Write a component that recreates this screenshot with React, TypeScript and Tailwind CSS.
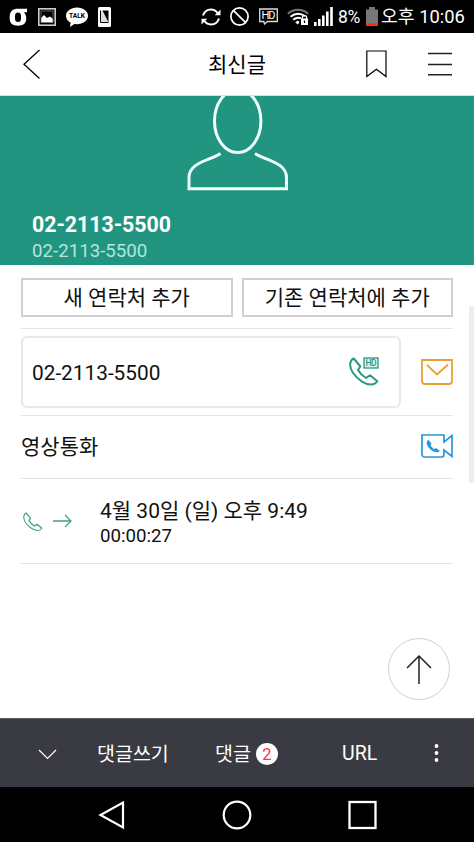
import type { ReactNode } from 'react';

const HANDSET = 'M4.8 1.5L11.3 9.5L9 13C11 16.5 13.5 19 17 21L21 18.3L28.3 24.3C25.5 28.8 19 28.3 13 24.6C6 20 .2 12.5 1.3 6C1.7 3.8 2.8 2.2 4.8 1.5Z';

/** Android status bar */
const StatusBar = () => {
    return (
        <div className="h-[33px] shrink-0 bg-black text-white flex items-center pl-[9px] pr-[9px]">
            <svg width={18} height={18} viewBox="0 0 18 18" className="mr-[11px]">
                <path d="M18 .5V4.3H14.8C16.5 6 17.3 8 17.3 10.5C17.3 15.5 14 17.7 9 17.7C4 17.7 .7 15.5 .7 10.5V8.5C.7 3 4 .7 9 .7C13 .7 16.5 .9 18 .5ZM9 4.5C6.8 4.5 6 6 6 8.5V10.5C6 13 7 14 9 14C11 14 12 13 12 10.5V8C12 6 11 4.5 9 4.5Z" fill="white" fillRule="evenodd" />
            </svg>
            <svg width={18} height={18} viewBox="0 0 18 18" fill="none" className="mr-[10px]">
                <rect x=".8" y=".8" width="16.4" height="16.4" stroke="#ccc" strokeWidth="1.6" />
                <path d="M3 14.5V10L6 7L9 10L12 8.5L15 11V14.5Z" fill="white" />
                <path d="M3 14.5V3H15V14.5" stroke="#777" strokeWidth=".8" />
            </svg>
            <svg width={22} height={20} viewBox="0 0 22 20" className="mr-[10px]">
                <path d="M11 .5C4.8 .5 0 4.2 0 8.8C0 12 2 14.4 4.7 15.8L3.8 20L8.5 17C15.8 18 22 14.3 22 8.8C22 4.2 17.2 .5 11 .5Z" fill="white" />
                <text x="11" y="11.4" textAnchor="middle" fontSize="7.2" fontWeight="700" textLength="16" lengthAdjust="spacingAndGlyphs" fontFamily="Roboto, sans-serif" fill="black">TALK</text>
            </svg>
            <svg width={13} height={20} viewBox="0 0 13 20">
                <rect width="13" height="20" rx="1.5" fill="white" />
                <path d="M4.5 3.5L10.5 15.5H2.5V3.5Z" fill="#ddd" />
                <path d="M4.5 3.5H10.5V15.5Z" fill="black" />
                <path d="M2.5 3.5V15.5H10.5" fill="none" stroke="black" strokeWidth="1" />
            </svg>
            <svg width={20} height={18} viewBox="0 0 20 18" fill="none" stroke="white" strokeWidth="2" className="ml-auto mr-[9px]">
                <path d="M2 7.5C3.3 3.7 6.3 1.6 10 1.6C12.8 1.6 15 2.8 16.5 5" />
                <path d="M18 10.5C16.7 14.3 13.7 16.4 10 16.4C7.2 16.4 5 15.2 3.5 13" />
                <path d="M19.5 1.5V7.3H13.7Z" fill="white" stroke="none" />
                <path d="M.5 16.5V10.7H6.3Z" fill="white" stroke="none" />
            </svg>
            <svg width={19} height={19} viewBox="0 0 19 19" fill="none" stroke="white" strokeWidth="1.7" className="mr-[10px]">
                <circle cx="9.5" cy="9.5" r="8.6" />
                <path d="M3.6 3.6L15.4 15.4" />
            </svg>
            <svg width={19} height={17} viewBox="0 0 19 17" fill="none" stroke="#ddd" strokeWidth="1.3" className="mr-[9px]">
                <path d="M.7 1H18.3V13.5H8.5L5.5 16L4.8 13.5H.7Z" />
                <text x="9.5" y="11.2" textAnchor="middle" fontSize="11" textLength="14" fontFamily="Roboto, sans-serif" fill="white" stroke="none">HD</text>
            </svg>
            <svg width={22} height={18} viewBox="0 0 22 18" fill="none" className="mr-[5px]">
                <path d="M.8 5.7C7 .5 15 .5 21.2 5.7" stroke="#777" strokeWidth="2" />
                <path d="M3.5 8.8C8 5 13.5 5 18 8M6.2 11.8C9 9.5 12 9.3 14 10.5" stroke="white" strokeWidth="2" />
                <path d="M8.2 14.5L10.8 12.5L12.5 14L11 16.5Z" fill="white" />
                <path d="M14 10.5H21V17H14Z" fill="white" />
                <path d="M15.4 11V9.2C15.4 7.2 19.6 7.2 19.6 9.2V11" stroke="white" strokeWidth="1.3" />
                <path d="M17.5 12.5V15" stroke="black" strokeWidth="1.2" />
            </svg>
            <svg width={19} height={19} viewBox="0 0 19 19" fill="white" className="mr-[5px]">
                <path d="M0 15H2.6V19H0ZM4 12H6.6V19H4ZM8 8.5H10.6V19H8ZM12 4.5H14.6V19H12ZM16.2 0H18.8V19H16.2Z" />
            </svg>
            <span className="w-[22px] mr-[6px] pt-px text-[17.5px] tracking-[-0.3px]">8%</span>
            <svg width={12} height={19} viewBox="0 0 12 19" className="mr-[3px]">
                <path d="M0 2.5H3V0H9V2.5H12V19H0Z" fill="#777" />
                <path d="M0 16.5H12V19H0Z" fill="#fb3000" />
            </svg>
            <span className="w-[84px] text-[18.3px] whitespace-nowrap">오후 10:06</span>
        </div>
    );
};

/** Page header with the board title */
const Header = () => {
    return (
        <header className="h-[63px] shrink-0 border-b border-[#ddd] bg-white flex items-center pl-[23px] pr-[22px]">
            <svg width={17} height={30} viewBox="0 0 17 30" fill="none" stroke="black" strokeWidth="1.3" className="mr-[168px]">
                <path d="M16.5 1L1 15.3L16.5 29.5" />
            </svg>
            <h1 className="w-[60px] pt-[4px] text-[21px] whitespace-nowrap">최신글</h1>
            <svg width={21} height={28} viewBox="0 0 21 28" fill="none" stroke="black" strokeWidth="1.2" className="ml-auto mr-[41px]">
                <path d="M.8 1H20V26.5L10.4 19.2L.8 26.5Z" />
            </svg>
            <svg width={24} height={24} viewBox="0 0 24 24" stroke="#222" strokeWidth="1.4">
                <path d="M0 1.5H24M0 12.5H24M0 22.8H24" />
            </svg>
        </header>
    );
};

/** Outlined action under the contact banner */
const ContactButton = ({ children }: { children: ReactNode }) => {
    return (
        <button className="h-[39px] flex-1 pt-[3px] border-2 border-[#d0d0d0] text-[21px] whitespace-nowrap flex items-center justify-center">
            {children}
        </button>
    );
};

/** Contact details */
const Contact = () => {
    return (
        <main className="relative flex-1 bg-white text-[#111]">
            <section className="h-[169px] bg-[#229581] text-white overflow-hidden">
                <svg width={102} height={97} viewBox="0 0 102 97" fill="none" stroke="#effffb" strokeWidth="3" className="ml-[187px]">
                    <ellipse cx="50.7" cy="25" rx="23.2" ry="31.5" />
                    <path d="M33.5 57.5C22 65 2 66.5 2 81.5V92.8H99.5V81.5C99.5 66.5 79.5 65 68 57.5" />
                </svg>
                <div className="pl-[32px] pt-[18px]">
                    <p className="text-[21.3px] leading-7 font-bold">02-2113-5500</p>
                    <p className="text-[18.7px] leading-[25px] text-[#b5e5db]">02-2113-5500</p>
                </div>
            </section>
            <section className="px-[21px] pt-[13px]">
                <div className="flex gap-[9px]">
                    <ContactButton>새 연락처 추가</ContactButton>
                    <ContactButton>기존 연락처에 추가</ContactButton>
                </div>
                <div className="mt-[11px] h-[88px] border-y-[1.5px] border-[#e5e5e5] flex items-center justify-between">
                    <div className="w-[380px] h-[72px] border-2 border-[#e8e8e8] rounded-md flex items-center justify-between pl-[9px] pr-[20px]">
                        <span className="pt-[3px] text-[20.8px]">02-2113-5500</span>
                        <svg width={30} height={30} viewBox="0 0 30 30" fill="none" stroke="#279883" strokeWidth="2">
                            <path d={HANDSET} strokeLinejoin="round" />
                            <rect x="15" y="1" width="14" height="10" fill="#dff3ed" strokeWidth="1.3" />
                            <text x="22" y="9" textAnchor="middle" fontSize="8.5" fontWeight="500" textLength="11" fontFamily="Roboto, sans-serif" fill="#279883" stroke="none">HD</text>
                        </svg>
                    </div>
                    <svg width={32} height={26} viewBox="0 0 32 26" fill="none" stroke="#e9a137" strokeWidth="1.8">
                        <path d="M1 1H31V22C31 24 30 25 28 25H4C2 25 1 24 1 22ZM6 6L16 15.5L27 5.5" />
                    </svg>
                </div>
                <div className="h-[63px] border-b-[1.5px] border-[#e5e5e5] flex items-center justify-between">
                    <span className="pt-[2px] text-[21px]">영상통화</span>
                    <svg width={32} height={24} viewBox="0 0 32 24" fill="none" stroke="#2697dc" strokeWidth="1.7" className="mb-[2px]">
                        <path d="M1 1H23V8L31 1.5V22.5L23 16V20.5C23 22 22 23 20.5 23H4C2 23 1 22 1 20Z" />
                        <path d="M7 6C5 7.5 5.3 11.5 9 15C12.5 18.5 17 19.5 18.7 16.8L15 14L13 15.2L9.5 11.5L10.5 9.5L7.5 6Z" fill="#2697dc" stroke="none" />
                    </svg>
                </div>
                <div className="h-[85px] border-b-[1.5px] border-[#e5e5e5] flex items-center">
                    <svg width={20} height={20} viewBox="0 0 30 30" fill="none" stroke="#3da28d" strokeWidth="1.8" className="ml-[2px] mr-[10px] mt-px">
                        <path d={HANDSET} strokeLinejoin="round" />
                    </svg>
                    <svg width={19} height={14} viewBox="0 0 19 14" fill="none" stroke="#3da28d" strokeWidth="1.3" className="mr-[28px]">
                        <path d="M0 7H18M12 1L18 7L12 13" />
                    </svg>
                    <div className="pt-[4px]">
                        <p className="text-[21px] leading-[26px] whitespace-nowrap">4월 30일 (일) 오후 9:49</p>
                        <p className="text-[18.7px] leading-6">00:00:27</p>
                    </div>
                </div>
            </section>
            <div className="absolute right-0 top-[210px] w-[5px] h-[177px] bg-[#eee]" />
            <button className="absolute right-[24px] bottom-[18px] size-[62px] rounded-full border border-[#d0d0d0] bg-white flex items-center justify-center">
                <svg width={26} height={30} viewBox="0 0 26 30" fill="none" stroke="#222" strokeWidth="1.5">
                    <path d="M13 30V2M1 14L13 2L25 14" />
                </svg>
            </button>
        </main>
    );
};

/** Comment toolbar */
const Toolbar = () => {
    return (
        <footer className="h-[69px] shrink-0 bg-[#393a42] border-t border-[#5b5c62] text-white text-[19.5px] flex items-center pl-[38px] pr-[35px] whitespace-nowrap">
            <svg width={19} height={11} viewBox="0 0 19 11" fill="none" stroke="white" strokeWidth="1.2" className="mr-[40px] mt-[2px]">
                <path d="M1 1L9.5 9.5L18 1" />
            </svg>
            <span className="w-[118px] pt-[3px]">댓글쓰기</span>
            <span className="w-[41px] pt-[3px]">댓글</span>
            <span className="size-[22px] rounded-full bg-white text-[#fa3545] text-[16.5px] leading-[23px] text-center mt-[2px]">2</span>
            <span className="ml-[64px] pt-[2px]">URL</span>
            <svg width={5} height={18} viewBox="0 0 5 18" fill="white" className="ml-auto">
                <circle cx="2.5" cy="2" r="1.9" />
                <circle cx="2.5" cy="9" r="1.9" />
                <circle cx="2.5" cy="16" r="1.9" />
            </svg>
        </footer>
    );
};

/** Android navigation keys */
const NavKeys = () => {
    return (
        <nav className="h-[55px] shrink-0 bg-black flex items-center justify-between pl-[98px] pr-[96px]">
            <svg width={27} height={30} viewBox="0 0 27 30" fill="none" stroke="white" strokeWidth="2.2">
                <path d="M25 2.5V27.5L2.5 15Z" />
            </svg>
            <svg width={30} height={30} viewBox="0 0 30 30" fill="none" stroke="white" strokeWidth="2.2">
                <circle cx="15" cy="15" r="13.3" />
            </svg>
            <svg width={30} height={30} viewBox="0 0 30 30" fill="none" stroke="white" strokeWidth="2.3">
                <rect x="1.5" y="2" width="26" height="26" />
            </svg>
        </nav>
    );
};

const App = () => {
    return (
        <div className="w-[474px] h-[842px] overflow-hidden flex flex-col bg-white font-[Roboto,'Noto_Sans_CJK_KR',sans-serif]">
            <StatusBar />
            <Header />
            <Contact />
            <Toolbar />
            <NavKeys />
        </div>
    );
};

export default App;
